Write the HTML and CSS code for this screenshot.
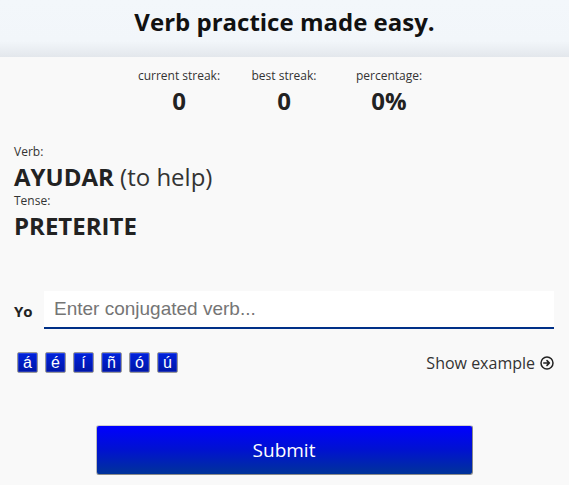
FILE: index.html
```html
<!DOCTYPE html>
<html lang="en">
<head>
<meta charset="utf-8">
<link rel="stylesheet" href="styles.css">
</head>
<body>
<header class="top">
  <h1 class="title">Verb practice made easy.</h1>
</header>
<main class="main">
  <section class="stats">
    <div class="stat"><div class="stat-label">current streak:</div><div class="stat-value">0</div></div>
    <div class="stat"><div class="stat-label">best streak:</div><div class="stat-value">0</div></div>
    <div class="stat"><div class="stat-label">percentage:</div><div class="stat-value">0%</div></div>
  </section>
  <section class="prompt">
    <div class="small-label">Verb:</div>
    <div class="verb"><strong>AYUDAR</strong> (to help)</div>
    <div class="small-label">Tense:</div>
    <div class="tense">PRETERITE</div>
  </section>
  <section class="answer">
    <label class="pronoun" for="ans">Yo</label>
    <input id="ans" class="answer-input" type="text" placeholder="Enter conjugated verb...">
  </section>
  <section class="tools">
    <div class="accents">
      <button class="accent">á</button>
      <button class="accent">é</button>
      <button class="accent">í</button>
      <button class="accent">ñ</button>
      <button class="accent">ó</button>
      <button class="accent">ú</button>
    </div>
    <div class="example">Show example
      <svg class="arrow" width="14" height="14" viewBox="0 0 14 14"><circle cx="7" cy="7" r="6" fill="none" stroke="#222" stroke-width="1.5"/><path d="M3.8 7h5.6M7 4.6 9.4 7 7 9.4" fill="none" stroke="#222" stroke-width="1.6" stroke-linecap="round" stroke-linejoin="round"/></svg>
    </div>
  </section>
  <div class="submit-wrap">
    <button class="submit">Submit</button>
  </div>
</main>
</body>
</html>
```
FILE: styles.css
```css
* { box-sizing: border-box; }
html, body { margin: 0; padding: 0; }
body {
  background: #f9f9f9;
  font-family: "Open Sans", "DejaVu Sans", sans-serif;
  color: #222;
  width: 569px;
  height: 485px;
  overflow: hidden;
}
.top {
  height: 57px;
  background: linear-gradient(to bottom, #f3f7fb 0%, #f2f6fa 72%, #e3e7ec 100%);
  display: flex;
  justify-content: center;
  padding-top: 5px;
}
.title {
  margin: 0;
  font-size: 24px;
  font-weight: 700;
  color: #111;
  line-height: 34px;
}
.main { padding: 0 15px 0 14px; }
.stats {
  display: flex;
  justify-content: center;
  padding-top: 10px;
}
.stat {
  width: 105px;
  text-align: center;
}
.stat-label {
  font-size: 12px;
  line-height: 18px;
  color: #333;
}
.stat-value {
  font-size: 24px;
  font-weight: 700;
  line-height: 32px;
  color: #222;
}
.prompt { margin-top: 27px; }
.small-label {
  font-size: 12px;
  line-height: 16px;
  color: #333;
}
.verb {
  font-size: 24px;
  line-height: 33px;
  color: #333;
}
.verb strong { color: #222; }
.tense {
  font-size: 24px;
  font-weight: 700;
  line-height: 33px;
  color: #222;
}
.answer {
  margin-top: 49px;
  display: flex;
  align-items: center;
  gap: 9px;
}
.pronoun {
  font-size: 15px;
  font-weight: 700;
  color: #222;
  width: 21px;
  padding-top: 2px;
}
.answer-input {
  flex: 1;
  height: 38px;
  border: none;
  border-bottom: 2px solid #003087;
  background: #fff;
  padding: 0 10px;
  font-family: "Liberation Sans", Arial, sans-serif;
  font-size: 19px;
  outline: none;
}
.answer-input::placeholder { color: #757575; }
.tools {
  margin-top: 23px;
  height: 21px;
  display: flex;
  justify-content: space-between;
  align-items: center;
  padding-left: 3px;
}
.accents { display: flex; gap: 7px; }
.accent {
  width: 21px;
  height: 21px;
  padding: 0;
  border: 1px solid #9a9a9a;
  border-radius: 2px;
  background: linear-gradient(to bottom, #0022dd, #0016a6);
  color: #fff;
  font-family: "Liberation Sans", Arial, sans-serif;
  font-size: 16px;
  line-height: 19px;
  box-shadow: inset 0 0 0 1px rgba(255,255,255,0.15);
}
.example {
  font-size: 16px;
  color: #333;
  display: flex;
  align-items: center;
  gap: 5px;
}
.arrow { display: block; }
.submit-wrap {
  display: flex;
  justify-content: center;
  margin-top: 52px;
}
.submit {
  width: 377px;
  height: 50px;
  border: 1px solid #8a8a8a;
  border-top-color: #cfcfcf;
  border-left-color: #bbb;
  border-radius: 3px;
  background: linear-gradient(to bottom, #0000ff 0%, #0012d0 50%, #003399 100%);
  color: #fff;
  font-family: "Open Sans", sans-serif;
  font-size: 19px;
}
```
